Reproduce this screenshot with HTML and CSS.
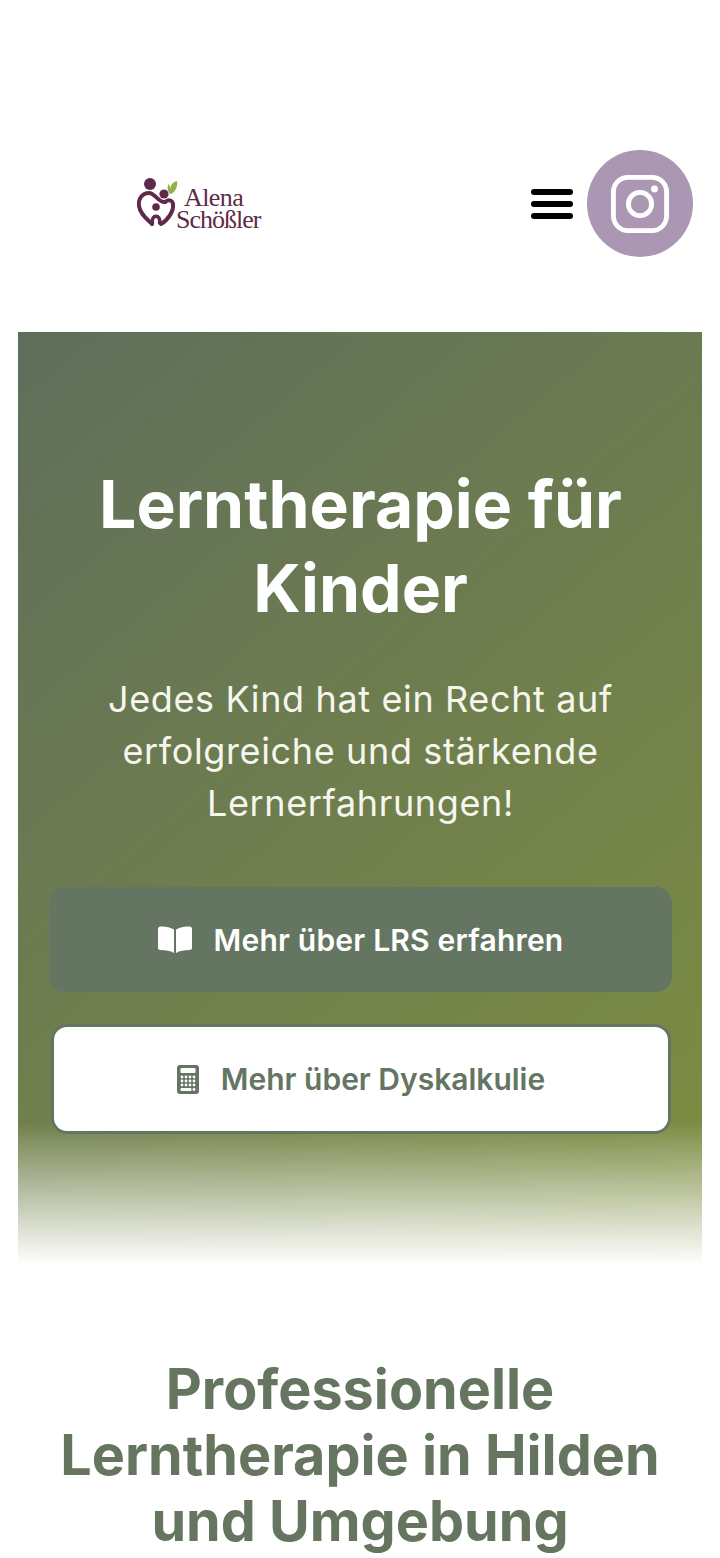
FILE: index.html
```html
<!DOCTYPE html>
<html lang="de">
<head>
    <meta charset="UTF-8">
    <meta name="viewport" content="width=device-width, initial-scale=1.0">
    <title>Lerntherapie für Kinder</title>
    <link rel="stylesheet" href="styles.css">
</head>
<body>
    <header class="site-header">
        <a class="logo" href="#">
            <svg class="logo-mark" viewBox="0 0 41 50" width="41" height="50" aria-hidden="true">
                <circle cx="13" cy="6" r="6" fill="#5f2a4a"/>
                <circle cx="27" cy="16" r="4.6" fill="#5f2a4a"/>
                <circle cx="19" cy="29" r="3.8" fill="#5f2a4a"/>
                <g fill="none" stroke="#5f2a4a" stroke-width="4" stroke-linecap="round">
                    <path d="M28 24C22 25 18 15 12 15 5 15 1 21 2 28 3 36 10 41 15 46"/>
                    <path d="M28 24C31 22 35 21 36 26 37 33 31 42 24 46"/>
                    <path d="M15.500 45C13.500 36 24.500 36 22.500 45" stroke-width="3.500"/>
                </g>
                <path d="M33 16C30 12 30 8 32 6L34 11C33 7 36 4 40 3 41 9 38 15 33 16z" fill="#8fb04a"/>
            </svg>
            <span class="logo-text">
                <span class="logo-first">Alena</span>
                <span class="logo-last">Schößler</span>
            </span>
        </a>
        <div class="header-right">
            <button class="menu-toggle" type="button" aria-label="Menü">
                <span></span><span></span><span></span>
            </button>
            <a class="insta" href="#" aria-label="Instagram">
                <svg viewBox="0 0 60 60" width="58" height="58" fill="none" stroke="#fff" aria-hidden="true">
                    <rect x="2.500" y="2.500" width="55" height="55" rx="15" stroke-width="5"/>
                    <circle cx="30" cy="30" r="12" stroke-width="5"/>
                    <circle cx="45" cy="14.500" r="3.600" fill="#fff" stroke="none"/>
                </svg>
            </a>
        </div>
    </header>

    <section class="hero">
        <h1>Lerntherapie für Kinder</h1>
        <p class="hero-sub">Jedes Kind hat ein Recht auf erfolgreiche und stärkende Lernerfahrungen!</p>
        <div class="hero-buttons">
            <a class="btn btn-dark" href="#">
                <svg viewBox="0 0 34 27" width="34" height="27" fill="currentColor" aria-hidden="true">
                    <path d="M16 3.500C12 1 6 0 2.500.500 1 .700 0 1.700 0 3v19c0 1 1 2 2.500 2 5 0 10 .8 13.500 3z"/>
                    <path d="M18 3.500C22 1 28 0 31.500.500 33 .700 34 1.700 34 3v19c0 1-1 2-2.500 2-5 0-10 .8-13.500 3z"/>
                </svg>
                <span>Mehr über LRS erfahren</span>
            </a>
            <a class="btn btn-light" href="#">
                <svg viewBox="0 0 22 29" width="22" height="29" aria-hidden="true">
                    <rect width="22" height="29" rx="3" fill="currentColor"/>
                    <g fill="#fff">
                        <rect x="3.500" y="3" width="15" height="5" rx="1"/>
                        <circle cx="5" cy="12" r="1.400"/><circle cx="9" cy="12" r="1.400"/><circle cx="13" cy="12" r="1.400"/><circle cx="17" cy="12" r="1.400"/>
                        <circle cx="5" cy="16" r="1.400"/><circle cx="9" cy="16" r="1.400"/><circle cx="13" cy="16" r="1.400"/><circle cx="17" cy="16" r="1.400"/>
                        <circle cx="5" cy="20" r="1.400"/><circle cx="9" cy="20" r="1.400"/><circle cx="13" cy="20" r="1.400"/><circle cx="17" cy="20" r="1.400"/>
                        <rect x="3.500" y="23" width="11" height="3" rx="1"/>
                        <circle cx="17" cy="24.500" r="1.400"/>
                    </g>
                </svg>
                <span>Mehr über Dyskalkulie</span>
            </a>
        </div>
    </section>

    <section class="intro">
        <h2>Professionelle Lerntherapie in Hilden und Umgebung</h2>
    </section>
</body>
</html>
```

FILE: styles.css
```css
* {
    margin: 0;
    padding: 0;
    box-sizing: border-box;
}

html, body {
    height: 1558px;
    overflow: hidden;
}

body {
    background: #fff;
    font-family: Inter, "Noto Sans", sans-serif;
}

a {
    text-decoration: none;
}

.site-header {
    height: 332px;
    padding: 150px 27px 75px 137px;
    display: flex;
    justify-content: space-between;
    align-items: flex-start;
}

.logo {
    display: flex;
    align-items: flex-start;
    margin-top: 28px;
    color: #5f2a4a;
}

.logo-mark {
    flex-shrink: 0;
}

.logo-text {
    display: block;
    margin: 9px 0 0 -2px;
    font-family: "Liberation Serif", serif;
    font-size: 26px;
    line-height: 22px;
    letter-spacing: -1px;
}

.logo-first,
.logo-last {
    display: block;
}

.logo-first {
    margin-left: 8px;
    letter-spacing: -0.6px;
}

.header-right {
    display: flex;
    align-items: center;
    gap: 14px;
}

.menu-toggle {
    width: 42px;
    display: flex;
    flex-direction: column;
    gap: 6px;
    background: none;
    border: none;
}

.menu-toggle span {
    display: block;
    height: 6px;
    border-radius: 3px;
    background: #000;
}

.insta {
    width: 106px;
    height: 107px;
    border-radius: 50%;
    background: #ab97b3;
    display: flex;
    align-items: center;
    justify-content: center;
}

.hero {
    position: relative;
    margin: 0 18px;
    height: 933px;
    padding: 130px 30px 0 31px;
    background: linear-gradient(140deg, #5f6e5b 0%, #7f8f40 100%);
    text-align: center;
}

/* white fade along the bottom edge */
.hero::after {
    content: "";
    position: absolute;
    left: 0;
    right: 0;
    bottom: 0;
    height: 143px;
    background: linear-gradient(to bottom, rgba(255, 255, 255, 0), #fff);
}

.hero h1 {
    font-size: 66px;
    line-height: 84px;
    font-weight: 700;
    color: #fff;
}

.hero-sub {
    margin: 43px 0 58px;
    font-size: 36px;
    line-height: 52px;
    font-weight: 400;
    letter-spacing: 0.63px;
    color: #f6f6ee;
}

.hero-buttons {
    position: relative;
    z-index: 1;
    display: flex;
    flex-direction: column;
    gap: 32px;
}

.btn {
    display: flex;
    align-items: center;
    justify-content: center;
    gap: 22px;
    font-size: 30px;
    font-weight: 600;
    border-radius: 16px;
}

.btn-dark {
    height: 105px;
    background: #647661;
    color: #fff;
    letter-spacing: 0.2px;
}

.btn-light {
    height: 110px;
    margin: 0 1px 0 2px;
    background: #fff;
    border: 3px solid #647661;
    color: #647661;
}

.intro {
    padding: 91px 32px 0;
    text-align: center;
}

.intro h2 {
    font-size: 55.700px;
    line-height: 66px;
    font-weight: 700;
    color: #65755f;
}
```
